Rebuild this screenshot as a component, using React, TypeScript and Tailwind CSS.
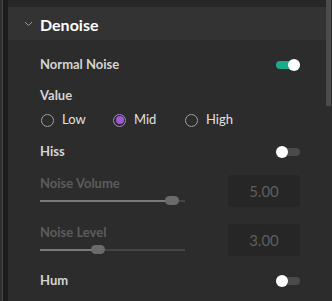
import React from "react";

const font = { fontFamily: 'Lato, "Noto Sans", sans-serif' };

function Toggle({ on }: { on: boolean }) {
  return (
    <div className="relative h-3 w-6">
      <div
        className={`absolute left-0 right-0 top-[2px] h-2 rounded-full ${
          on ? "bg-[#1aab8a]" : "bg-[#4a4a4a]"
        }`}
      />
      <div
        className={`absolute top-0 h-3 w-3 rounded-full bg-white ${
          on ? "right-0" : "left-0"
        }`}
      />
    </div>
  );
}

function Radio({ label, checked }: { label: string; checked?: boolean }) {
  return (
    <div className="flex w-[72px] items-center gap-2">
      <div
        className={`flex h-[13px] w-[13px] items-center justify-center rounded-full border ${
          checked ? "border-[#b07fe0]" : "border-[#a0a0a0]"
        }`}
      >
        {checked && <div className="h-[8px] w-[8px] rounded-full bg-[#9b5bd4]" />}
      </div>
      <span className="text-[13px] text-[#e0e0e0]">{label}</span>
    </div>
  );
}

function Slider({ pct }: { pct: number }) {
  return (
    <div className="relative h-4 w-[145px]">
      <div className="absolute left-0 right-0 top-[7px] h-[2px] bg-[#454545]" />
      <div
        className="absolute left-0 top-[7px] h-[2px] bg-[#7a7a7a]"
        style={{ width: `${pct}%` }}
      />
      <div
        className="absolute top-[3px] h-[9px] w-[14px] -translate-x-1/2 rounded-full bg-[#6b6b6b]"
        style={{ left: `${pct}%` }}
      />
    </div>
  );
}

function NumberRow({ label, value, pct }: { label: string; value: string; pct: number }) {
  return (
    <div className="flex items-start justify-between">
      <div className="flex flex-col gap-[2px]">
        <div className="h-4 text-[13px] font-bold leading-4 text-[#5c5c5c]">{label}</div>
        <Slider pct={pct} />
      </div>
      <div className="flex h-8 w-[72px] items-center justify-center rounded bg-[#262626] text-[15px] text-[#5e5e5e]">
        {value}
      </div>
    </div>
  );
}

export default function App() {
  return (
    <div className="flex h-[301px] w-[332px] overflow-hidden bg-[#2c2c2c]" style={font}>
      <div className="flex w-2 shrink-0">
        <div className="w-[2px] bg-[#2e2e2e]" />
        <div className="w-px bg-[#474747]" />
        <div className="flex-1 bg-[#1c1c1c]" />
      </div>
      <div className="flex flex-1 flex-col">
        <div className="h-[7px] bg-[#272727]" />
        <div className="flex h-[33px] items-center gap-[7px] bg-[#333333] pl-[16px] pt-[3px]">
          <svg width="9" height="6" viewBox="0 0 9 6" className="mt-[-3px]">
            <path d="M1 1l3.5 3.5L8 1" stroke="#9a9a9a" strokeWidth="1" fill="none" />
          </svg>
          <span className="text-[16px] font-bold text-white">Denoise</span>
        </div>
        <div className="flex flex-col pl-8 pr-[26px]">
          <div className="mt-[13px] flex h-6 items-center justify-between">
            <span className="text-[13px] font-bold text-[#d4d4d4]">Normal Noise</span>
            <Toggle on />
          </div>
          <div className="mt-[9px] flex h-5 items-center">
            <span className="text-[13px] font-bold text-[#d4d4d4]">Value</span>
          </div>
          <div className="mt-[4px] flex h-5 items-center pl-px">
            <Radio label="Low" />
            <Radio label="Mid" checked />
            <Radio label="High" />
          </div>
          <div className="mt-[10px] flex h-6 items-center justify-between">
            <span className="text-[13px] font-bold text-[#d4d4d4]">Hiss</span>
            <Toggle on={false} />
          </div>
          <div className="mt-[11px]">
            <NumberRow label="Noise Volume" value="5.00" pct={91} />
          </div>
          <div className="mt-[15px]">
            <NumberRow label="Noise Level" value="3.00" pct={40} />
          </div>
          <div className="mt-[11px] flex h-6 items-center justify-between">
            <span className="text-[13px] font-bold text-[#d4d4d4]">Hum</span>
            <Toggle on={false} />
          </div>
        </div>
      </div>
      <div className="flex w-[6px] shrink-0 flex-col bg-[#2c2c2c]">
        <div className="h-[106px] w-[5px] bg-[#4b4b4b]" />
      </div>
    </div>
  );
}
